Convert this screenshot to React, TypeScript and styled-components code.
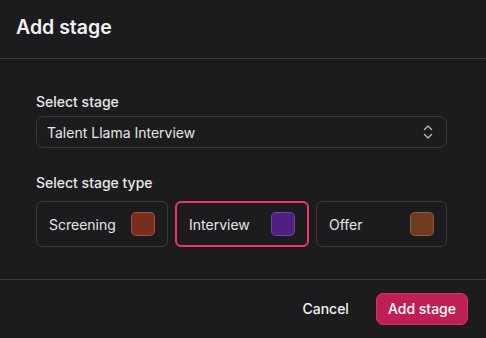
import { useState } from 'react';
import styled, { createGlobalStyle } from 'styled-components';

const GlobalStyle = createGlobalStyle`
  * { box-sizing: border-box; }
  body {
    margin: 0;
    background: #1c1c1e;
    font-family: Inter, 'Liberation Sans', sans-serif;
    color: #ececec;
  }
`;

interface IStageType {
  label: string;
  color: string;
}

const stageTypes: IStageType[] = [
  { label: 'Screening', color: '#7a2c1f' },
  { label: 'Interview', color: '#4f2082' },
  { label: 'Offer', color: '#6f3a1e' },
];

const App = () => {
  const [selected, setSelected] = useState('Interview');

  return (
    <>
      <GlobalStyle />
      <Dialog role='dialog' aria-label='Add stage'>
        <Header>
          <Title>Add stage</Title>
        </Header>
        <Body>
          <Label>Select stage</Label>
          <Select>
            <span>Talent Llama Interview</span>
            <svg width='10' height='16' viewBox='0 0 10 16' fill='none'>
              <polyline
                points='1.5,5.5 5,2 8.5,5.5'
                stroke='#b5b5b8'
                strokeWidth='1.4'
                strokeLinecap='round'
                strokeLinejoin='round'
              />
              <polyline
                points='1.5,10.5 5,14 8.5,10.5'
                stroke='#b5b5b8'
                strokeWidth='1.4'
                strokeLinecap='round'
                strokeLinejoin='round'
              />
            </svg>
          </Select>
          <Label $spaced>Select stage type</Label>
          <TypeGrid>
            {stageTypes.map((t) => (
              <TypeCard
                key={t.label}
                $active={selected === t.label}
                onClick={() => setSelected(t.label)}
              >
                <span>{t.label}</span>
                <Swatch $color={t.color} />
              </TypeCard>
            ))}
          </TypeGrid>
        </Body>
        <Footer>
          <GhostButton>Cancel</GhostButton>
          <PrimaryButton>Add stage</PrimaryButton>
        </Footer>
      </Dialog>
    </>
  );
};

const Dialog = styled.div`
  width: 486px;
  height: 338px;
  background: #1c1c1e;
  display: flex;
  flex-direction: column;
`;

const Header = styled.div`
  height: 59px;
  padding: 13px 16px 0;
  border-bottom: 1px solid #3a3a3d;
`;

const Title = styled.h2`
  margin: 0;
  font-size: 19.5px;
  line-height: 28px;
  font-weight: 600;
  color: #f2f2f2;
`;

const Body = styled.div`
  padding: 33px 39px 32px 36px;
  border-bottom: 1px solid #3a3a3d;
`;

const Label = styled.div<{ $spaced?: boolean }>`
  font-size: 14px;
  line-height: 20px;
  font-weight: 500;
  color: #e8e8e8;
  margin-top: ${({ $spaced }) => ($spaced ? '25px' : '0')};
  margin-bottom: ${({ $spaced }) => ($spaced ? '8px' : '4px')};
`;

const Select = styled.div`
  height: 32px;
  border: 1px solid #3a3a3d;
  border-radius: 7px;
  padding: 0 13px 0 10px;
  display: flex;
  align-items: center;
  justify-content: space-between;
  font-size: 14px;
  color: #e6e6e6;
`;

const TypeGrid = styled.div`
  display: grid;
  grid-template-columns: 132px 134px 131px;
  gap: 7px;
`;

const TypeCard = styled.div<{ $active: boolean }>`
  height: 46px;
  border: ${({ $active }) =>
    $active ? '2px solid #f2336f' : '1px solid #3a3a3d'};
  border-radius: 6px;
  padding: 0 12px;
  display: flex;
  align-items: center;
  justify-content: space-between;
  font-size: 14px;
  color: #e6e6e6;
  cursor: pointer;
`;

const Swatch = styled.div<{ $color: string }>`
  width: 24px;
  height: 24px;
  border-radius: 5px;
  background: ${({ $color }) => $color};
  border: 1px solid rgba(255, 255, 255, 0.18);
`;

const Footer = styled.div`
  flex: 1;
  display: flex;
  align-items: center;
  justify-content: flex-end;
  gap: 15px;
  padding: 0 18px 1px;
`;

const GhostButton = styled.button`
  background: none;
  border: none;
  padding: 0 12px;
  height: 32px;
  font-family: inherit;
  font-size: 14px;
  font-weight: 500;
  color: #f2f2f2;
`;

const PrimaryButton = styled.button`
  background: #c01f56;
  border: 1px solid #d0356a;
  border-radius: 7px;
  padding: 0 11px;
  height: 32px;
  font-family: inherit;
  font-size: 14px;
  font-weight: 500;
  color: #ffffff;
`;

export default App;
